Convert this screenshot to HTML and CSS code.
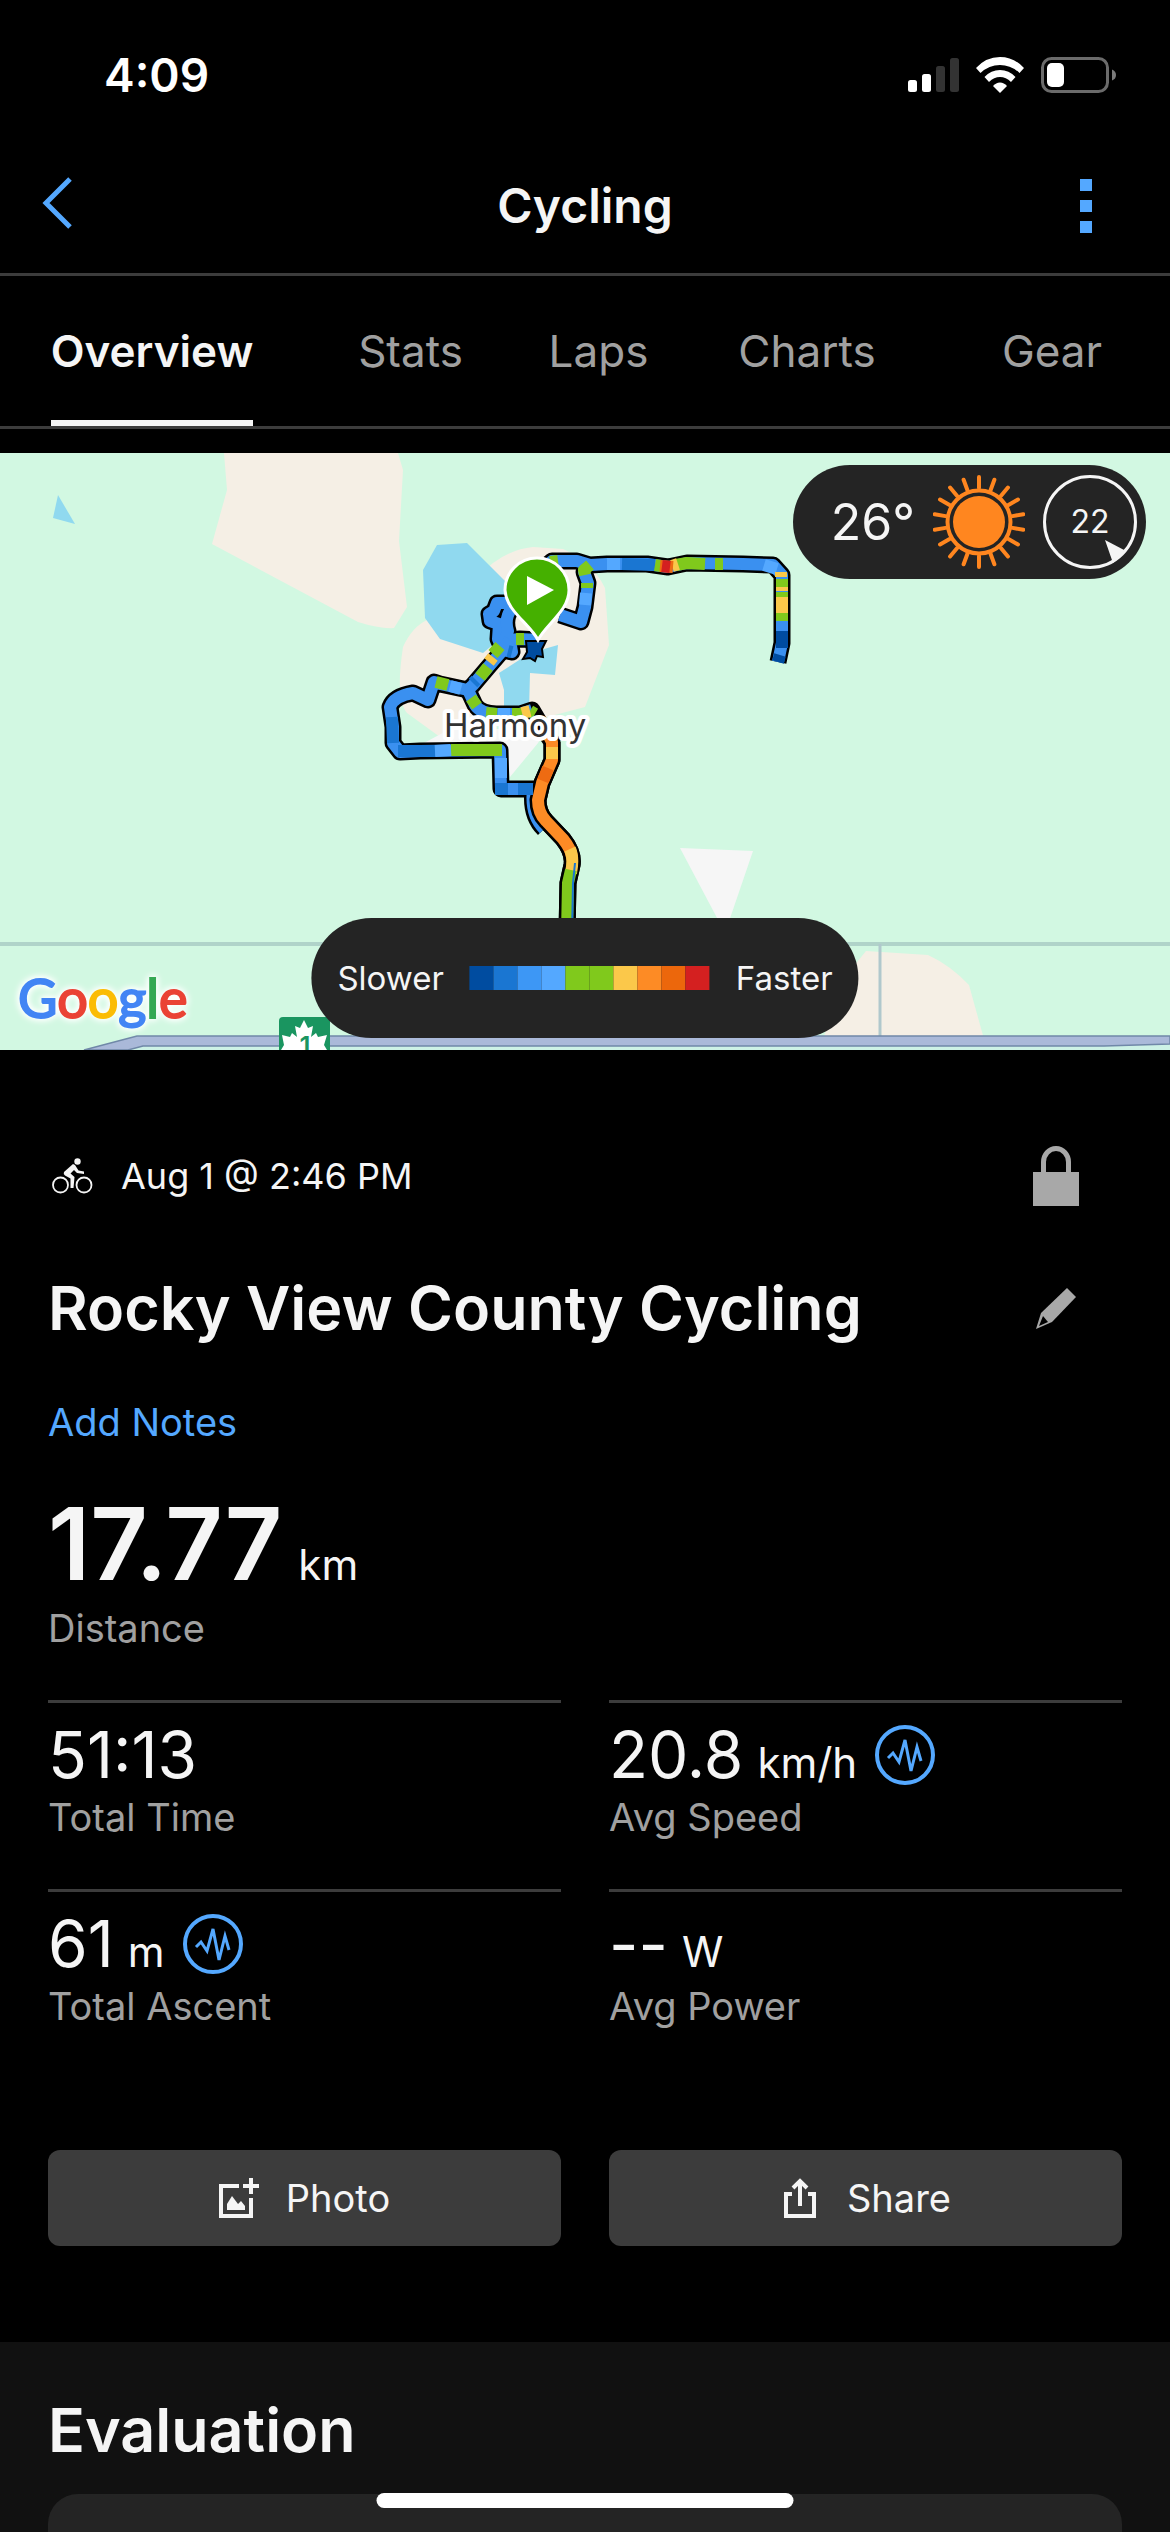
FILE: index.html
```html
<!DOCTYPE html>
<html lang="en">
<head>
    <meta charset="UTF-8">
    <meta name="viewport" content="width=device-width, initial-scale=1.0">
    <title>Cycling</title>
    <link rel="stylesheet" href="styles.css">
</head>
<body>
    <div class="page">
        <div class="status-bar">
            <span class="clock">4:09</span>
            <div class="status-icons">
                <svg width="51" height="36" viewBox="0 0 51 36">
                    <rect x="0" y="23" width="9" height="12" rx="2.5" fill="#fff"/>
                    <rect x="14" y="17" width="9" height="18" rx="2.5" fill="#fff"/>
                    <rect x="28" y="9" width="9" height="26" rx="2.5" fill="#333"/>
                    <rect x="42" y="1" width="9" height="34" rx="2.5" fill="#333"/>
                </svg>
                <svg width="48" height="36" viewBox="0 0 48 36" fill="#fff">
                    <path d="M0 11 Q10 0 24 0 Q38 0 48 11 L43.500 16 Q35 8 24 8 Q13 8 4.500 16 Z"/>
                    <path d="M8.500 20 Q15 13 24 13 Q33 13 39.500 20 L35 25 Q30 20 24 20 Q18 20 13 25 Z"/>
                    <path d="M17 29 Q20 25.500 24 25.500 Q28 25.500 31 29 L24 36 Z"/>
                </svg>
                <svg width="75" height="36" viewBox="0 0 75 36">
                    <rect x="1.500" y="1.500" width="65" height="33" rx="9" fill="none" stroke="#6b6b6b" stroke-width="3"/>
                    <rect x="6" y="6" width="17" height="24" rx="5" fill="#fff"/>
                    <path d="M71 12.500 Q75 14 75 18 Q75 22 71 23.500 Z" fill="#7b7b7b"/>
                </svg>
            </div>
        </div>

        <header class="nav-bar">
            <button class="icon-button back-button" aria-label="Back">
                <svg width="30" height="52" viewBox="0 0 30 52" fill="none" stroke="#54a8ff" stroke-width="5">
                    <path d="M28 2 L4 26 L28 50"/>
                </svg>
            </button>
            <h1>Cycling</h1>
            <button class="icon-button menu-button" aria-label="More">
                <svg width="12" height="54" viewBox="0 0 12 54" fill="#54a8ff">
                    <rect y="0" width="12" height="12"/>
                    <rect y="21" width="12" height="12"/>
                    <rect y="42" width="12" height="12"/>
                </svg>
            </button>
        </header>

        <nav class="tabs">
            <a class="tab active" href="#overview">Overview</a>
            <a class="tab" href="#stats">Stats</a>
            <a class="tab" href="#laps">Laps</a>
            <a class="tab" href="#charts">Charts</a>
            <a class="tab" href="#gear">Gear</a>
        </nav>

        <div class="map" id="overview">
            <svg class="map-canvas" viewBox="0 0 1170 597" preserveAspectRatio="xMidYMid slice">
                <rect width="1170" height="597" fill="#d2f8e2"/>
                <!-- land and water -->
                <g fill="#f5efe5">
                    <path d="M224 0 L227 37 L212 91 L358 169 Q380 176 394 175 L407 154 L399 88 L403 17 L398 0 Z"/>
                    <path d="M493 110 Q512 96 533 94 L563 96 Q592 108 605 135 L609 192 L585 254 L547 264 L440 284 L407 260 Q395 246 403 194 Q412 174 427 167 Z"/>
                    <path d="M820 597 L840 530 L866 498 L928 502 Q950 512 969 532 L987 597 Z"/>
                </g>
                <g fill="#f6f6f6">
                    <path d="M424 290 L450 276 L547 276 L538 290 L510 324 L506 292 Z"/>
                    <path d="M680 395 L753 398 L725 480 Z"/>
                </g>
                <g fill="#90d9ef">
                    <path d="M58 42 L53 65 L75 71 Z"/>
                    <path d="M437 92 L467 90 L507 130 L507 180 L483 200 L440 186 L425 165 L423 117 Z"/>
                    <path d="M499 220 L530 200 L558 192 L555 222 L530 220 L529 258 L504 258 L504 237 Z"/>
                </g>
                <!-- roads -->
                <path d="M0 491 H1170" stroke="#b0d3c9" stroke-width="4"/>
                <path d="M880 491 V597" stroke="#b0c8cc" stroke-width="3"/>
                <path d="M128 597 L143 593 H1104 L1170 591 V597 Z" fill="#cdf2e6"/>
                <path d="M84 597 L137 583 H1170 V591 L1104 593 H143 L128 597 Z" fill="#aab9d9" stroke="#7088a8" stroke-width="1.500"/>
                <!-- highway shield -->
                <rect x="279" y="564" width="51" height="50" rx="4" fill="#1a9560"/>
                <path d="M304 567 L308 575 L313 573 L311 584 L316 580 L318 584 L327 582 L324 592 L327 597 H281 L284 592 L282 582 L290 584 L292 580 L297 584 L295 573 L300 575 Z" fill="#fff"/>
                <text class="shield-number" x="305" y="602" text-anchor="middle">1</text>

                <g fill="none" stroke-linejoin="round">
                    <!-- outer loop -->
                    <g stroke="#000" stroke-width="17">
                        <path d="M540 118 L552 108 L577 108 L590 112 L607 111 L647 111 L668 114 L687 110 L743 111 L773 112 L782 122 L782 190 L778 209"/>
                        <path d="M586 112 L584 119 L588 130 L585 154 L581 169 L560 162"/>
                        <path d="M508 150 L497 150 L494 158 L489 161 L490 168 L499 171 L498 186 L503 197 L512 199 L510 187 L520 186 L538 187"/>
                        <path d="M512 155 Q504 165 508 178 L502 195"/>
                        <path d="M510 187 L503 197 L490 212 L473 232 L468 237 L440 231 L434 229 L428 247 L413 240 Q394 243 390 254 L393 274 L393 290 L400 299 L420 298 L500 297 L501 336 L533 336 Q530 362 544 376"/>
                        <path d="M468 237 L475 252 Q480 260 496 261 L520 261 L532 257 L542 274 L552 289 L552 307 L542 330 L538 347 Q538 360 546 368 L563 386 Q574 400 572 412 L568 430 L567 480"/>
                    </g>
                    <g stroke="#3a90f0" stroke-width="12">
                        <path d="M540 118 L552 108 L577 108 L590 112 L607 111 L647 111 L668 114 L687 110 L743 111 L773 112 L782 122 L782 190 L778 209"/>
                        <path d="M586 112 L584 119 L588 130 L585 154 L581 169 L560 162"/>
                        <path d="M508 150 L497 150 L494 158 L489 161 L490 168 L499 171 L498 186 L503 197 L512 199 L510 187 L520 186 L538 187"/>
                        <path d="M512 155 Q504 165 508 178 L502 195"/>
                        <path d="M510 187 L503 197 L490 212 L473 232 L468 237 L440 231 L434 229 L428 247 L413 240 Q394 243 390 254 L393 274 L393 290 L400 299 L420 298 L500 297 L501 336 L533 336 Q530 362 544 376"/>
                        <path d="M468 237 L475 252 Q480 260 496 261 L520 261 L532 257"/>
                    </g>
                    <!-- lower road on top of the blue one -->
                    <path d="M552 289 L552 307 L542 330 L538 347 Q538 360 546 368 L563 386 Q574 400 572 412 L568 430 L567 480" stroke="#000" stroke-width="17"/>
                    <path d="M545 276 L552 289 L552 307 L542 330 L538 347 Q538 360 546 368 L563 386 Q571 396 572 404" stroke="#fd8b25" stroke-width="12"/>
                    <path d="M552 294 V306 M570 396 Q574 405 571 420" stroke="#fbc84a" stroke-width="12"/>
                    <path d="M548 315 L543 328" stroke="#ee6b12" stroke-width="12"/>
                    <path d="M571 417 L568 430 L567 480" stroke="#80c91c" stroke-width="12"/>
                    <path d="M575 410 L573 430 L572 480" stroke="#1a76d2" stroke-width="2"/>
                    <g stroke-width="12">
                        <g stroke="#80c91c">
                            <path d="M550 109 L558 108 M590 112 L584 117 L585 122 M587 130 L587 135 M676 112 L687 110 L705 111 M715 111 L723 111 M782 126 V134 M782 139 V144 M782 160 V168"/>
                            <path d="M516 186 L524 186 M500 193 L493 201 M488 214 L480 224 M436 229 L448 232 M471 245 L477 253 M486 260 L497 261 M512 261 L522 261 M530 258 L535 261"/>
                            <path d="M451 297 L502 297"/>
                        </g>
                        <g stroke="#1a76d2">
                            <path d="M622 111 L655 112 M398 298 L435 298 M392 264 L393 290 M495 336 H508 M518 336 L533 336 M508 198 L512 199 M473 230 L476 227"/>
                        </g>
                        <g stroke="#54a8ff">
                            <path d="M607 111 L620 111 M435 298 L451 297 M501 305 L501 325 M461 236 L450 233 M498 261 L510 261 M586 140 L585 152 M777 116 L764 112"/>
                        </g>
                        <g stroke="#fbc84a">
                            <path d="M672 113 L678 111 M781 119 V124 M782 134 V138 M782 144 V160 M493 204 L489 209 M522 260 L530 258"/>
                        </g>
                        <path d="M655 112 L661 113" stroke="#80c91c"/>
                        <path d="M660 113 L673 114" stroke="#ee6b12"/>
                        <path d="M662 113 L670 114" stroke="#d42020"/>
                        <path d="M782 178 V195 M780 202 L778 209" stroke="#004ca0"/>
                    </g>
                </g>
                <path d="M526 188 L546 188 L542 196 L543 204 L537 203 L535 208 L530 205 L523 206 L527 199 Z" fill="#004ca0" stroke="#000" stroke-width="2"/>

                <!-- start pin -->
                <path d="M538 187 C530 171 506 158 505 137 A32 32 0 0 1 569 137 C569 158 546 171 538 187 Z" fill="#45b000" stroke="#fff" stroke-width="3"/>
                <path d="M527 123 L554 137 L527 152 Z" fill="#fff"/>
                <text class="map-label" x="444" y="284">Harmony</text>
            </svg>

            <div class="google"><span class="g-blue">G</span><span class="g-red">o</span><span class="g-yellow">o</span><span class="g-blue">g</span><span class="g-green">l</span><span class="g-red">e</span></div>

            <div class="weather">
                <span class="temperature">26°</span>
                <svg width="92" height="94" viewBox="-46 -47 92 94">
                    <circle r="26" fill="#ff861f"/>
                    <circle r="31.500" fill="none" stroke="#ff861f" stroke-width="4"/>
                    <g stroke="#ff861f" stroke-width="4" stroke-linecap="round">
                        <path id="rays" d="M0 -34 V-45 M0 34 V45"/>
                        <use href="#rays" transform="rotate(20)"/>
                        <use href="#rays" transform="rotate(40)"/>
                        <use href="#rays" transform="rotate(60)"/>
                        <use href="#rays" transform="rotate(80)"/>
                        <use href="#rays" transform="rotate(100)"/>
                        <use href="#rays" transform="rotate(120)"/>
                        <use href="#rays" transform="rotate(140)"/>
                        <use href="#rays" transform="rotate(160)"/>
                    </g>
                </svg>
                <svg width="94" height="94" viewBox="-47 -47 94 94">
                    <circle r="45.500" fill="none" stroke="#f5f5f5" stroke-width="3"/>
                    <path d="M15 18 L36 29 L23 41 Z" fill="#f5f5f5"/>
                    <text class="wind-speed" x="0" y="11" text-anchor="middle">22</text>
                </svg>
            </div>

            <div class="legend">
                <span>Slower</span>
                <div class="legend-scale">
                    <i class="speed-1"></i>
                    <i class="speed-2"></i>
                    <i class="speed-3"></i>
                    <i class="speed-4"></i>
                    <i class="speed-5"></i>
                    <i class="speed-5"></i>
                    <i class="speed-6"></i>
                    <i class="speed-7"></i>
                    <i class="speed-8"></i>
                    <i class="speed-9"></i>
                </div>
                <span>Faster</span>
            </div>
        </div>

        <main class="activity">
            <div class="row date-row">
                <svg width="41" height="36" viewBox="0 0 41 36" fill="none" stroke="#f5f5f5">
                    <circle cx="8.500" cy="27" r="7.500" stroke-width="1.800"/>
                    <circle cx="32" cy="27" r="7.500" stroke-width="1.800"/>
                    <circle cx="25.500" cy="3.500" r="3.200" fill="#f5f5f5" stroke="none"/>
                    <path d="M21 6 L12 14 Q11 16 13 17.500 L18.500 20.500 L18.500 30 L21.500 30 L22.500 19 L18.500 15.500 L22 12 L25 15 L32 16 L32 13.500 L26.500 12.500 L23 7 Z" fill="#f5f5f5" stroke="none"/>
                </svg>
                <span class="date">Aug 1 @ 2:46 PM</span>
                <button class="icon-button lock-button" aria-label="Privacy">
                    <svg width="46" height="60" viewBox="0 0 46 60">
                        <rect y="26" width="46" height="34" fill="#a8a8a8"/>
                        <path d="M10.500 28 V16 A12.500 13.500 0 0 1 35.500 16 V28" fill="none" stroke="#a8a8a8" stroke-width="5"/>
                    </svg>
                </button>
            </div>

            <div class="row title-row">
                <h2>Rocky View County Cycling</h2>
                <button class="icon-button edit-button" aria-label="Edit name">
                    <svg width="40" height="41" viewBox="0 0 40 41">
                        <path d="M31 0 L40 9 L16 34 L0 41 L5 25 Z" fill="#a8a8a8"/>
                        <path d="M7 28 L12 34 L3 38 Z" fill="#000"/>
                    </svg>
                </button>
            </div>

            <a class="add-notes" href="#notes">Add Notes</a>

            <div class="distance">
                <strong>17.77</strong>
                <span class="unit">km</span>
            </div>
            <div class="label">Distance</div>

            <div class="metrics">
                <div class="metric">
                    <div class="value">51:13</div>
                    <div class="label">Total Time</div>
                </div>
                <div class="metric">
                    <div class="value">20.8
                        <span class="unit">km/h</span>
                        <svg width="60" height="60" viewBox="0 0 60 60" fill="none" stroke="#54a8ff">
                            <circle cx="30" cy="30" r="28" stroke-width="4"/>
                            <path d="M13 33 L18 28 L24 37 L30 15 L36 46 L42 22 L46 36" stroke-width="3"/>
                        </svg>
                    </div>
                    <div class="label">Avg Speed</div>
                </div>
                <div class="metric">
                    <div class="value">61
                        <span class="unit">m</span>
                        <svg width="60" height="60" viewBox="0 0 60 60" fill="none" stroke="#54a8ff">
                            <circle cx="30" cy="30" r="28" stroke-width="4"/>
                            <path d="M13 33 L18 28 L24 37 L30 15 L36 46 L42 22 L46 36" stroke-width="3"/>
                        </svg>
                    </div>
                    <div class="label">Total Ascent</div>
                </div>
                <div class="metric">
                    <div class="value">--
                        <span class="unit">W</span>
                    </div>
                    <div class="label">Avg Power</div>
                </div>
            </div>

            <div class="actions">
                <button class="action">
                    <svg width="41" height="40" viewBox="0 0 41 40" fill="none" stroke="#f5f5f5" stroke-width="4">
                        <path d="M20 8 H2 V38 H32 V20"/>
                        <path d="M32 0 V16 M24 8 H40"/>
                        <path d="M8 32 V26 L13 18 L19 26 L22 23 L26 28 V32 Z" fill="#f5f5f5" stroke="none"/>
                    </svg>
                    Photo
                </button>
                <button class="action">
                    <svg width="41" height="40" viewBox="0 0 41 40" fill="none" stroke="#f5f5f5" stroke-width="4">
                        <path d="M12 16 H6 V38 H34 V16 H28"/>
                        <path d="M20 28 V4"/>
                        <path d="M13 10 L20 3 L27 10"/>
                    </svg>
                    Share
                </button>
            </div>
        </main>

        <section class="evaluation">
            <h2>Evaluation</h2>
            <div class="card"></div>
        </section>
    </div>
    <div class="home-indicator"></div>
</body>
</html>
```

FILE: styles.css
```css
* {
    box-sizing: border-box;
}
body {
    margin: 0;
    background-color: #000;
    color: #f5f5f5;
    font-family: Inter, "Liberation Sans", sans-serif;
}
h1, h2 {
    margin: 0;
    font-weight: 600;
}
svg {
    display: block;
}
a {
    text-decoration: none;
}
button {
    border: none;
    color: inherit;
    font-family: inherit;
}
.icon-button {
    padding: 0;
    background: none;
}
.page {
    display: flex;
    flex-direction: column;
    min-height: 100vh;
}

/* Status bar */
.status-bar {
    display: flex;
    align-items: center;
    justify-content: space-between;
    height: 138px;
    padding: 12px 54px 0 104px;
}
.clock {
    color: #fff;
    font-size: 46px;
    font-weight: 600;
}
.status-icons {
    display: flex;
    gap: 17px;
}

/* Navigation */
.nav-bar {
    display: grid;
    grid-template-columns: 1fr auto 1fr;
    align-items: center;
    height: 138px;
    padding: 0 78px 0 42px;
    border-bottom: 3px solid #3c3c3c;
}
.nav-bar h1 {
    padding-left: 36px;
    font-size: 48px;
}
.back-button {
    justify-self: start;
    padding-bottom: 6px;
}
.menu-button {
    justify-self: end;
}
.tabs {
    display: grid;
    grid-template-columns: 304fr 213fr 163fr 254fr 236fr;
    justify-items: center;
    height: 153px;
    border-bottom: 3px solid #3c3c3c;
}
.tab {
    padding-top: 6px;
    border-bottom: 6px solid transparent;
    color: #a0a0a0;
    font-size: 44px;
    line-height: 138px;
}
.tab.active {
    border-bottom-color: #f5f5f5;
    color: #f5f5f5;
    font-weight: 600;
}

/* Map */
.map {
    position: relative;
    height: 597px;
    margin-top: 24px;
    overflow: hidden;
}
.map-canvas {
    width: 100%;
    height: 100%;
}
.map-label {
    fill: #333;
    stroke: #fff;
    stroke-width: 8px;
    stroke-linejoin: round;
    paint-order: stroke;
    font-size: 33px;
}
.shield-number {
    fill: #1a9560;
    font-size: 26px;
    font-weight: 600;
}
.google {
    position: absolute;
    left: 18px;
    bottom: 20px;
    filter: drop-shadow(0 0 3px #fff) drop-shadow(0 0 3px #fff);
    font-family: Lato, sans-serif;
    font-size: 54px;
    line-height: 64px;
    -webkit-text-stroke: 2px currentColor;
}
.g-blue {
    color: #4285f4;
}
.g-red {
    color: #ea4335;
}
.g-yellow {
    color: #fbbc05;
}
.g-green {
    color: #34a853;
}
.weather {
    position: absolute;
    top: 12px;
    right: 24px;
    display: flex;
    align-items: center;
    gap: 18px;
    height: 114px;
    padding: 0 9px 0 38px;
    border-radius: 57px;
    background-color: #242424;
}
.temperature {
    font-size: 50px;
}
.wind-speed {
    fill: #f5f5f5;
    font-size: 32px;
}
.legend {
    position: absolute;
    left: 50%;
    bottom: 12px;
    display: flex;
    align-items: center;
    gap: 26px;
    height: 120px;
    padding: 0 26px;
    border-radius: 60px;
    background-color: #242424;
    font-size: 33px;
    transform: translateX(-50%);
}
.legend-scale {
    display: flex;
}
.legend-scale i {
    width: 24px;
    height: 24px;
}
.speed-1 { background-color: #004ca0; }
.speed-2 { background-color: #1a76d2; }
.speed-3 { background-color: #3d97f5; }
.speed-4 { background-color: #54a8ff; }
.speed-5 { background-color: #80c91c; }
.speed-6 { background-color: #fbc84a; }
.speed-7 { background-color: #fd8b25; }
.speed-8 { background-color: #ec670c; }
.speed-9 { background-color: #d42020; }

/* Activity summary */
.activity {
    padding: 96px 48px;
}
.row {
    display: flex;
    align-items: center;
}
.date-row {
    height: 60px;
    padding: 0 43px 0 4px;
}
.date {
    margin-left: 28px;
    font-size: 36px;
}
.lock-button,
.edit-button {
    margin-left: auto;
}
.title-row {
    margin-top: 62px;
    padding-right: 46px;
}
h2 {
    font-size: 61px;
    line-height: 80px;
}
.add-notes {
    display: inline-block;
    margin-top: 50px;
    color: #54a8ff;
    font-size: 38px;
    line-height: 48px;
}
.distance {
    display: flex;
    align-items: baseline;
    gap: 16px;
    height: 100px;
    margin: 48px 0 10px;
    line-height: 100px;
}
.distance strong {
    font-size: 100px;
    font-weight: 600;
}
.unit {
    font-size: 42px;
}
.label {
    color: #a0a0a0;
    font-size: 38px;
    line-height: 48px;
}
.metrics {
    display: grid;
    grid-template-columns: 1fr 1fr;
    column-gap: 48px;
    margin-top: 48px;
}
.metric {
    padding: 20px 0 48px;
    border-top: 3px solid #3c3c3c;
}
.value {
    display: flex;
    align-items: baseline;
    gap: 14px;
    height: 64px;
    margin-bottom: 6px;
    font-size: 64px;
    line-height: 64px;
}
.value svg {
    align-self: center;
    margin-left: 4px;
}
.actions {
    display: grid;
    grid-template-columns: 1fr 1fr;
    gap: 48px;
    margin-top: 72px;
}
.action {
    display: flex;
    align-items: center;
    justify-content: center;
    gap: 26px;
    height: 96px;
    border-radius: 12px;
    background-color: #3c3c3c;
    font-size: 38px;
}

/* Evaluation */
.evaluation {
    display: flex;
    flex: 1;
    flex-direction: column;
    padding: 48px 48px 0;
    background-color: #111;
}
.card {
    flex: 1;
    margin-top: 24px;
    border-radius: 30px 30px 0 0;
    background-color: #242424;
}
.home-indicator {
    position: fixed;
    bottom: 24px;
    left: 50%;
    width: 417px;
    height: 15px;
    border-radius: 8px;
    background-color: #fff;
    transform: translateX(-50%);
}
```
